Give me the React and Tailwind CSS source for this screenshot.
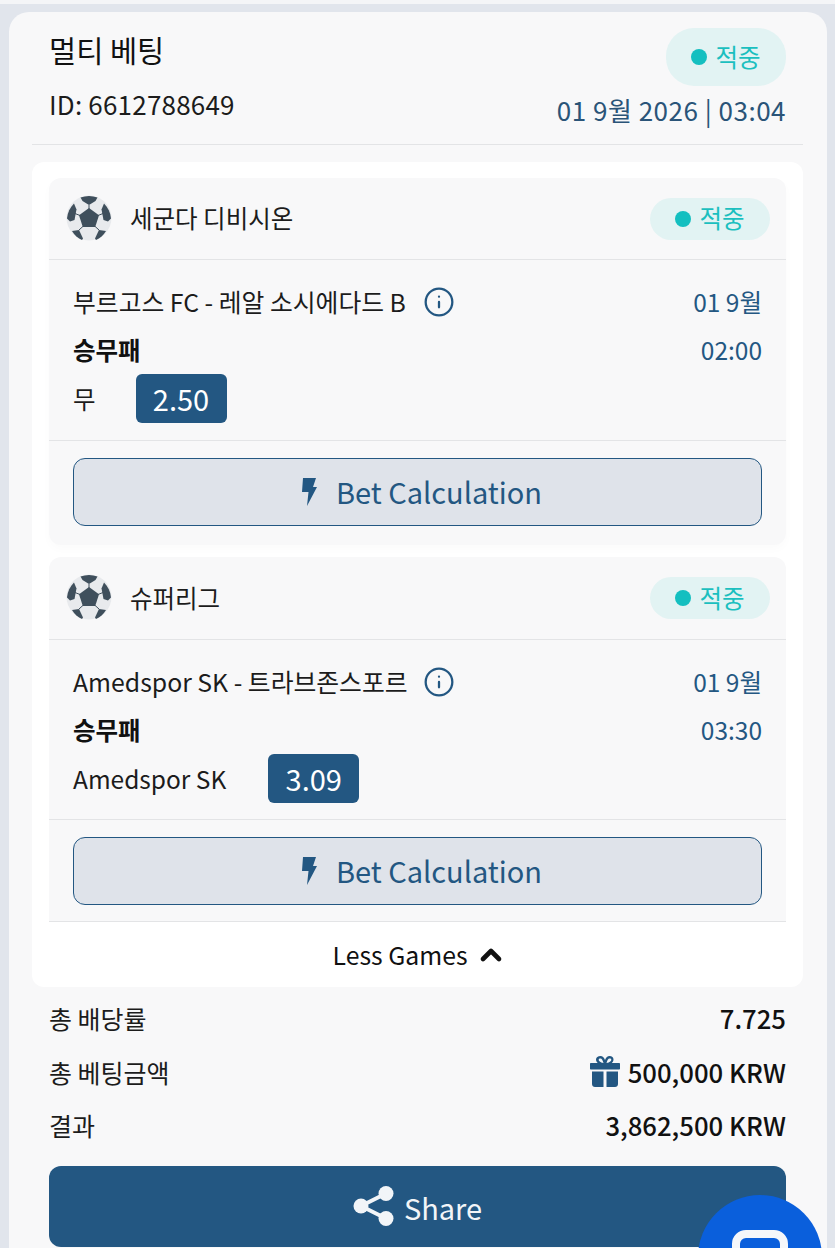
import { ChevronUp, Info } from 'lucide-react';

const Status = ({ big }) => (
  <div className={`flex items-center justify-center bg-[#e2f3f3] text-[#1bbfbf] w-[120px] gap-2 text-[24.500px] ${big ? 'h-[58px] rounded-[28px]' : 'h-[42px] rounded-full'}`}>
    <span className="w-[16px] h-[16px] rounded-full bg-[#14bfc0]" />
    <span className="leading-none">적중</span>
  </div>
);

const SoccerBall = () => (
  <svg width="46" height="46" viewBox="0 0 46 46" className="shrink-0 -translate-y-[1px] -translate-x-[1px]">
    <circle cx="23" cy="23" r="22.5" fill="#e8eaed" />
    <path d="M23 13l10 7.200-3.800 11.800H16.800L13 20.200z" fill="#3f4f5c" />
    <path d="M14.500 2.500C20 .5 26 .5 31.500 2.500L29.500 6 23 10 16.500 6z" fill="#3f4f5c" />
    <path d="M38 8.500c4 4 6.500 9 7 15l-3 3-4.500-1.500-2-10.500z" fill="#3f4f5c" />
    <path d="M8 8.500c-4 4-6.500 9-7 15l3 3 4.500-1.500 2-10.500z" fill="#3f4f5c" />
    <path d="M6 36l7-1 4 8.500-1 1.500C12 43.500 8.500 40 6 36z" fill="#3f4f5c" />
    <path d="M40 36l-7-1-4 8.500 1 1.500c4-1.500 7.500-5 10-9z" fill="#3f4f5c" />
    <path d="M23 10v4M14 20.500l-5-2M32 20.500l5-2M17.400 31L13 35M28.600 31l4.400 4" stroke="#3f4f5c" strokeWidth="1" />
  </svg>
);

const Bolt = () => (
  <svg width="16" height="28" viewBox="0 0 16 28" fill="#235782">
    <path d="M2 0h13l-3 9h4L6 28l1.500-14H1z" />
  </svg>
);

const Gift = () => (
  <svg width="30" height="32" viewBox="0 0 30 32" fill="#235782" className="-translate-y-[1px]">
    <path d="M10.500 1c2 0 3.500 1.500 4.500 4 1-2.500 2.500-4 4.500-4 2.500 0 4 1.500 4 3.500 0 1.500-.8 2.500-1.700 3.500H29c.6 0 1 .4 1 1v4.500c0 .6-.4 1-1 1H1c-.6 0-1-.4-1-1V9c0-.6.4-1 1-1h6.700C6.800 7 6 6 6 4.500 6 2.500 8 1 10.500 1zm0 2.500C9.300 3.500 8.700 4 8.700 4.800 8.700 6 10 7.500 13.500 8 12.800 5.500 11.800 3.500 10.500 3.500zm9 0c-1.300 0-2.300 2-3 4.500 3.500-.5 4.800-2 4.800-3.200 0-.8-.6-1.300-1.800-1.300z" />
    <path d="M2 16.500h11.500V32H5c-1.700 0-3-1.300-3-3zM16.500 16.500H28V29c0 1.700-1.300 3-3 3h-8.500z" />
  </svg>
);

const ShareIcon = () => (
  <svg width="42" height="42" viewBox="0 0 42 42" fill="#f2f5f8">
    <circle cx="33" cy="8.500" r="7.500" />
    <circle cx="8" cy="21" r="7.500" />
    <circle cx="33" cy="33.500" r="7.500" />
    <path d="M8 21L33 8.500M8 21l25 12.500" stroke="#f2f5f8" strokeWidth="4" />
  </svg>
);

const Game = ({ league, match, date, time, pick, odds, gap, infoGap, last }) => (
  <div className={`rounded-t-xl bg-[#f8f8f9] ${last ? 'h-[365px] border-b border-[#e3e4e6]' : 'h-[367px] rounded-b-xl shadow-[0_4px_10px_rgba(0,0,0,0.02)]'}`}>
    <div className={`flex items-center justify-between pl-[18px] pr-[16px] border-b border-[#e3e4e6] ${last ? 'h-[83px]' : 'h-[82px]'}`}>
      <div className="flex items-center gap-[17px]">
        <SoccerBall />
        <span className="text-[24.500px] text-[#1c1c1c]">{league}</span>
      </div>
      <Status />
    </div>
    <div className={`px-[24px] pt-[18px] border-b border-[#e3e4e6] ${last ? 'h-[180px]' : 'h-[181px]'}`}>
      <div className="flex items-center justify-between h-[48px]">
        <div className="flex items-center" style={{ gap: infoGap }}>
          <span className="text-[24.800px] text-[#1c1c1c] whitespace-nowrap">{match}</span>
          <Info size={32} strokeWidth={1.7} className="text-[#235782]" />
        </div>
        <span className="text-[24.500px] text-[#235782]">{date}</span>
      </div>
      <div className="flex items-center justify-between h-[48px]">
        <span className="text-[24.500px] font-bold text-[#111]">승무패</span>
        <span className="text-[24.500px] text-[#235782]">{time}</span>
      </div>
      <div className="flex items-center h-[48px]" style={{ gap }}>
        <span className="text-[24.500px] text-[#1c1c1c] translate-y-[1px]">{pick}</span>
        <span className="w-[91px] h-[49px] pt-[2px] rounded-md bg-[#235782] text-white text-[29px] flex items-center justify-center">{odds}</span>
      </div>
    </div>
    <div className="px-[24px] pt-[17px]">
      <button className="w-full h-[68px] pl-[8px] rounded-xl border-[1.500px] border-[#235782] bg-[#dfe3ea] flex items-center justify-center gap-[19px] text-[#235782] text-[29px]">
        <Bolt />
        <span>Bet Calculation</span>
      </button>
    </div>
  </div>
);

const Row = ({ label, children }) => (
  <div className="flex items-center justify-between h-[53.500px]">
    <span className="text-[25px] text-[#1c1c1c]">{label}</span>
    <span className="text-[25.700px] font-medium text-[#111] flex items-center gap-[8px]">{children}</span>
  </div>
);

export default function App() {
  return (
    <div className="relative h-[1248px] overflow-hidden bg-[#e1e5ec] pt-[12px] pl-[9px] font-['Noto_Sans_CJK_KR','Noto_Sans',sans-serif]">
      <div className="absolute left-0 right-0 top-0 h-[4px] bg-[#f4f5f7]" />
      <div className="w-[818px] h-[1300px] rounded-[20px] bg-[#f8f8f9] pl-[23px] pr-[24px]">
        <div className="h-[133px] border-b border-[#e3e4e6] px-[17px] relative">
          <div className="flex items-start justify-between pt-[15px]">
            <span className="text-[29.500px] text-[#111] leading-[44px]">멀티 베팅</span>
            <div className="mt-[1px]"><Status big /></div>
          </div>
          <div className="flex items-center justify-between mt-[4px]">
            <span className="text-[26px] text-[#1c1c1c] tracking-[0.2px] -translate-y-[6px]">ID: 6612788649</span>
            <span className="text-[26px] text-[#2a5478] tracking-[0.5px]">01 9월 2026 | 03:04</span>
          </div>
        </div>
        <div className="mt-[17px] h-[825px] rounded-xl bg-white px-[17px] pt-[16px]">
          <Game league="세군다 디비시온" match="부르고스 FC - 레알 소시에다드 B" date="01 9월" time="02:00" pick="무" odds="2.50" gap="40px" infoGap="17px" />
          <div className="h-[12px]" />
          <Game last league="슈퍼리그" match="Amedspor SK - 트라브존스포르" date="01 9월" time="03:30" pick="Amedspor SK" odds="3.09" gap="42px" infoGap="15px" />
          <div className="h-[65px] pl-[4px] flex items-center justify-center gap-[7px] text-[24.800px] text-[#111]">
            <span>Less Games</span>
            <ChevronUp size={32} strokeWidth={3.5} />
          </div>
        </div>
        <div className="px-[17px] pt-[5px]">
          <Row label="총 배당률"><span>7.725</span></Row>
          <Row label="총 베팅금액"><Gift /><span>500,000 KRW</span></Row>
          <Row label="결과"><span>3,862,500 KRW</span></Row>
          <button className="mt-[13px] w-full h-[81px] rounded-xl bg-[#235782] text-[#f2f5f8] flex items-center justify-center gap-[9px] text-[29px]">
            <ShareIcon />
            <span className="translate-y-[2px]">Share</span>
          </button>
        </div>
      </div>
      <div className="absolute left-[698px] top-[1195px] w-[124px] h-[124px] rounded-full bg-[#0a5fdc] flex justify-center pt-[35px]">
        <div className="w-[56px] h-[50px] rounded-[14px] border-[8px] border-[#f5f7fa]" />
      </div>
    </div>
  );
}
